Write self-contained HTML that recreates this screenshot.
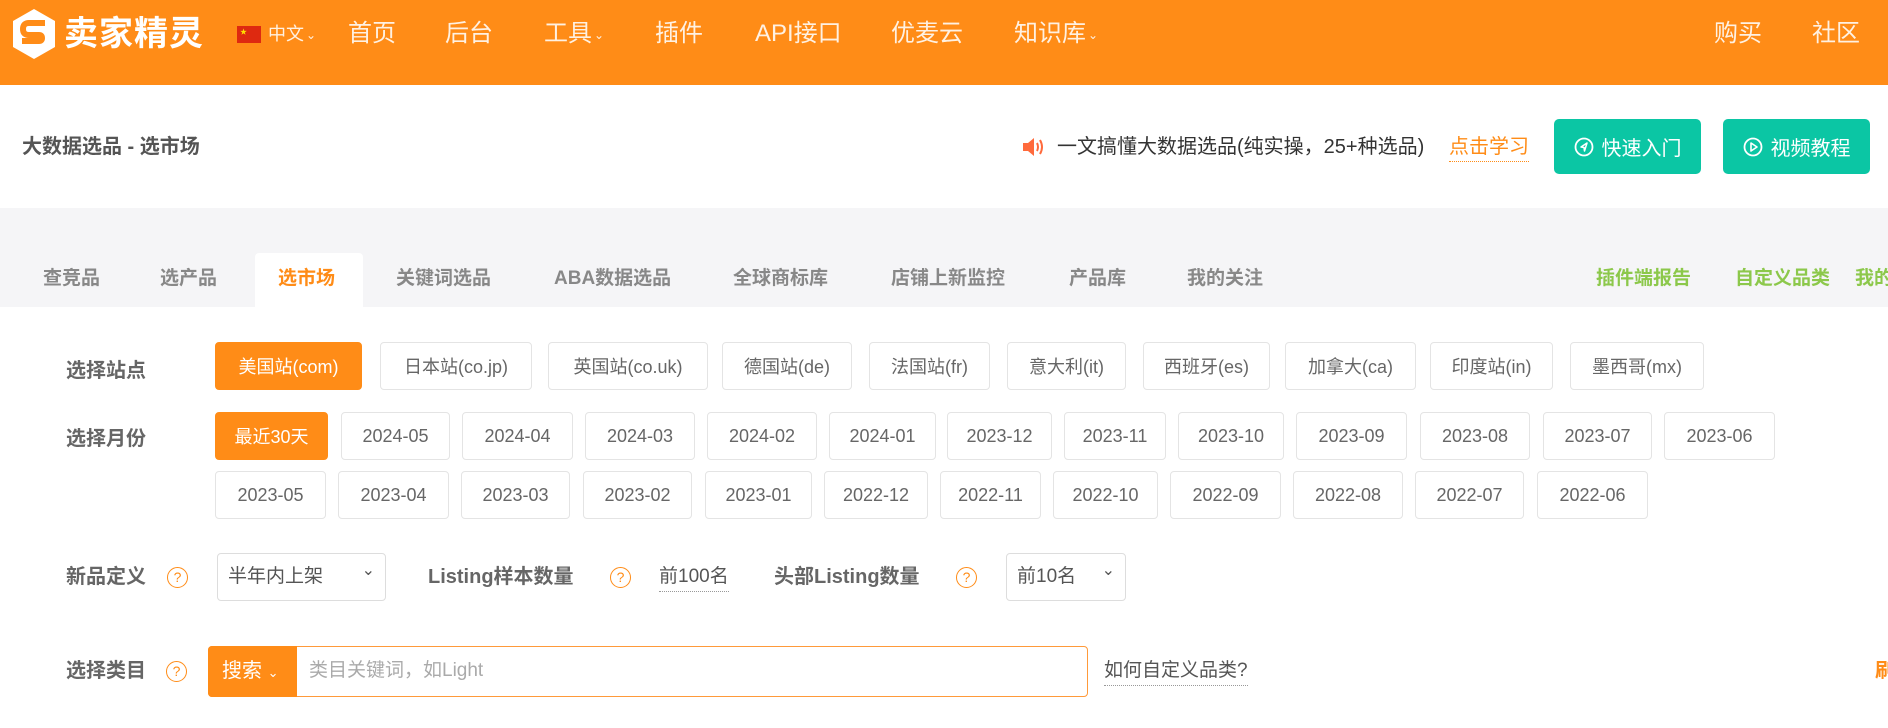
<!DOCTYPE html>
<html><head><meta charset="utf-8">
<style>
*{margin:0;padding:0;box-sizing:border-box}
body{width:1888px;height:728px;overflow:hidden;background:#fff;font-family:"Liberation Sans","Noto Sans CJK SC",sans-serif;position:relative}
.a{position:absolute;white-space:nowrap}
.hdr{position:absolute;left:0;top:0;width:1888px;height:85px;background:#ff8c17}
.nav{position:absolute;top:17px;color:#fff;font-size:24px;line-height:34px;opacity:.88;white-space:nowrap}
.car{font-size:12px;vertical-align:middle;margin-left:2px}
.grey{position:absolute;left:0;top:208px;width:1888px;height:99px;background:#f5f5f7}
.tab{position:absolute;top:266px;font-size:19px;font-weight:bold;color:#888;line-height:26px;white-space:nowrap}
.btn{position:absolute;height:48px;border:1px solid #e4e4e4;border-radius:4px;font-size:18px;color:#666;display:flex;align-items:center;justify-content:center;background:#fff}
.on{background:#ff8c17;border-color:#ff8c17;color:#fff}
.lbl{position:absolute;font-size:20px;font-weight:bold;color:#666;line-height:28px;white-space:nowrap}
.q{position:absolute;width:21px;height:21px;border:1.5px solid #ff8c17;border-radius:50%;color:#ff8c17;font-size:14px;line-height:18px;text-align:center}
.sel{position:absolute;height:48px;border:1px solid #ddd;border-radius:4px;font-size:19px;color:#555;padding-left:10px;line-height:46px}
.sel:after{content:"⌄";position:absolute;right:10px;top:-6px;font-size:16px;color:#555}
.gbtn{position:absolute;top:119px;height:55px;width:147px;background:#0bc6a4;border-radius:5px;color:#fff;font-size:20px;display:flex;align-items:center;justify-content:center}
.gbtn svg{margin-right:8px}
</style></head><body>
<div class="hdr"></div>
<svg class="a" style="left:12px;top:9px" width="44" height="50" viewBox="0 0 44 50"><path d="M22 0 L43 12 L43 38 L22 50 L1 38 L1 12 Z" fill="#fff"/><path d="M33 14 H17 Q11 14 11 20 Q11 26 17 26 H27 Q30 26 30 29 Q30 32 27 32 H10" fill="none" stroke="#ff8c17" stroke-width="6"/></svg>
<div class="a" style="left:64px;top:12px;color:#fff;font-size:34px;font-weight:bold;line-height:44px;letter-spacing:1px">卖家精灵</div>
<div class="a" style="left:237px;top:26px;width:24px;height:17px;background:#de2910"></div>
<div class="a" style="left:240px;top:27px;color:#ffde00;font-size:7px">★</div>
<div class="nav" style="left:268px;font-size:18px">中文<span class="car">⌄</span></div>
<div class="nav" style="left:348px">首页</div>
<div class="nav" style="left:445px">后台</div>
<div class="nav" style="left:544px">工具<span class="car">⌄</span></div>
<div class="nav" style="left:655px">插件</div>
<div class="nav" style="left:755px">API接口</div>
<div class="nav" style="left:891px">优麦云</div>
<div class="nav" style="left:1014px">知识库<span class="car">⌄</span></div>
<div class="nav" style="left:1714px">购买</div>
<div class="nav" style="left:1812px">社区</div>

<div class="a" style="left:22px;top:133px;font-size:20px;font-weight:bold;color:#555;line-height:28px">大数据选品 - 选市场</div>
<svg class="a" style="left:1022px;top:137px" width="22" height="20" viewBox="0 0 22 20"><path d="M1 6 H6 L12 1 V19 L6 14 H1 Z" fill="#ff6a3c"/><path d="M15 6 Q17 10 15 14 M18 3 Q22 10 18 17" fill="none" stroke="#ff6a3c" stroke-width="2"/></svg>
<div class="a" style="left:1057px;top:133px;font-size:20px;color:#333;line-height:28px">一文搞懂大数据选品(纯实操，25+种选品)</div>
<div class="a" style="left:1449px;top:133px;font-size:20px;color:#ff8c17;line-height:28px;border-bottom:1px dotted #ff8c17">点击学习</div>
<div class="gbtn" style="left:1554px"><svg width="20" height="20" viewBox="0 0 20 20"><circle cx="10" cy="10" r="8.5" fill="none" stroke="#fff" stroke-width="1.8"/><path d="M13 6 L7 10 L10 10.5 L10.5 14 Z" fill="none" stroke="#fff" stroke-width="1.5" stroke-linejoin="round"/></svg>快速入门</div>
<div class="gbtn" style="left:1723px"><svg width="20" height="20" viewBox="0 0 20 20"><circle cx="10" cy="10" r="8.5" fill="none" stroke="#fff" stroke-width="1.8"/><path d="M8 6 L14 10 L8 14 Z" fill="none" stroke="#fff" stroke-width="1.6" stroke-linejoin="round"/></svg>视频教程</div>

<div class="grey"></div>
<div class="a" style="left:255px;top:253px;width:108px;height:54px;background:#fff;border-radius:4px 4px 0 0"></div>
<div class="tab" style="left:43px">查竞品</div>
<div class="tab" style="left:160px">选产品</div>
<div class="tab" style="left:278px;color:#ff8c17">选市场</div>
<div class="tab" style="left:396px">关键词选品</div>
<div class="tab" style="left:554px">ABA数据选品</div>
<div class="tab" style="left:733px">全球商标库</div>
<div class="tab" style="left:891px">店铺上新监控</div>
<div class="tab" style="left:1069px">产品库</div>
<div class="tab" style="left:1187px">我的关注</div>
<div class="tab" style="left:1596px;color:#8cc84b">插件端报告</div>
<div class="tab" style="left:1735px;color:#8cc84b">自定义品类</div>
<div class="tab" style="left:1855px;color:#8cc84b">我的</div>

<div class="lbl" style="left:66px;top:357px">选择站点</div>
<div class="btn on" style="left:215px;top:342px;width:147px">美国站(com)</div>
<div class="btn" style="left:380px;top:342px;width:152px">日本站(co.jp)</div>
<div class="btn" style="left:548px;top:342px;width:160px">英国站(co.uk)</div>
<div class="btn" style="left:722px;top:342px;width:130px">德国站(de)</div>
<div class="btn" style="left:869px;top:342px;width:121px">法国站(fr)</div>
<div class="btn" style="left:1007px;top:342px;width:119px">意大利(it)</div>
<div class="btn" style="left:1143px;top:342px;width:127px">西班牙(es)</div>
<div class="btn" style="left:1285px;top:342px;width:131px">加拿大(ca)</div>
<div class="btn" style="left:1430px;top:342px;width:123px">印度站(in)</div>
<div class="btn" style="left:1570px;top:342px;width:134px">墨西哥(mx)</div>

<div class="lbl" style="left:66px;top:425px">选择月份</div>
<div class="btn on" style="left:215px;top:412px;width:113px">最近30天</div>
<div class="btn" style="left:341px;top:412px;width:109px">2024-05</div>
<div class="btn" style="left:462px;top:412px;width:111px">2024-04</div>
<div class="btn" style="left:585px;top:412px;width:110px">2024-03</div>
<div class="btn" style="left:707px;top:412px;width:110px">2024-02</div>
<div class="btn" style="left:829px;top:412px;width:107px">2024-01</div>
<div class="btn" style="left:947px;top:412px;width:105px">2023-12</div>
<div class="btn" style="left:1064px;top:412px;width:102px">2023-11</div>
<div class="btn" style="left:1178px;top:412px;width:106px">2023-10</div>
<div class="btn" style="left:1296px;top:412px;width:111px">2023-09</div>
<div class="btn" style="left:1420px;top:412px;width:110px">2023-08</div>
<div class="btn" style="left:1543px;top:412px;width:109px">2023-07</div>
<div class="btn" style="left:1664px;top:412px;width:111px">2023-06</div>
<div class="btn" style="left:215px;top:471px;width:111px">2023-05</div>
<div class="btn" style="left:338px;top:471px;width:111px">2023-04</div>
<div class="btn" style="left:461px;top:471px;width:109px">2023-03</div>
<div class="btn" style="left:583px;top:471px;width:109px">2023-02</div>
<div class="btn" style="left:705px;top:471px;width:107px">2023-01</div>
<div class="btn" style="left:824px;top:471px;width:104px">2022-12</div>
<div class="btn" style="left:940px;top:471px;width:101px">2022-11</div>
<div class="btn" style="left:1053px;top:471px;width:105px">2022-10</div>
<div class="btn" style="left:1170px;top:471px;width:111px">2022-09</div>
<div class="btn" style="left:1293px;top:471px;width:110px">2022-08</div>
<div class="btn" style="left:1415px;top:471px;width:109px">2022-07</div>
<div class="btn" style="left:1537px;top:471px;width:111px">2022-06</div>

<div class="lbl" style="left:66px;top:563px">新品定义</div>
<div class="q" style="left:167px;top:567px">?</div>
<div class="sel" style="left:217px;top:553px;width:169px">半年内上架</div>
<div class="lbl" style="left:428px;top:563px">Listing样本数量</div>
<div class="q" style="left:610px;top:567px">?</div>
<div class="a" style="left:659px;top:563px;font-size:19px;color:#555;line-height:28px;border-bottom:1px dotted #999">前100名</div>
<div class="lbl" style="left:774px;top:563px">头部Listing数量</div>
<div class="q" style="left:956px;top:567px">?</div>
<div class="sel" style="left:1006px;top:553px;width:120px">前10名</div>

<div class="lbl" style="left:66px;top:657px">选择类目</div>
<div class="q" style="left:166px;top:661px">?</div>
<div class="a" style="left:208px;top:646px;width:880px;height:51px;border:1.5px solid #ff9a3a;border-radius:4px"></div>
<div class="a" style="left:208px;top:646px;width:89px;height:51px;background:#ff8c17;border-radius:4px 0 0 4px;color:#fff;font-size:20px;line-height:51px;padding-left:14px">搜索 <span style="font-size:13px">⌄</span></div>
<div class="a" style="left:309px;top:657px;font-size:19px;color:#aaa;line-height:28px">类目关键词，如Light</div>
<div class="a" style="left:1104px;top:657px;font-size:19px;color:#555;line-height:28px;border-bottom:1px dotted #999">如何自定义品类?</div>
<div class="a" style="left:1875px;top:657px;font-size:20px;color:#ff8c17;font-weight:bold;line-height:28px">刷</div>
</body></html>
